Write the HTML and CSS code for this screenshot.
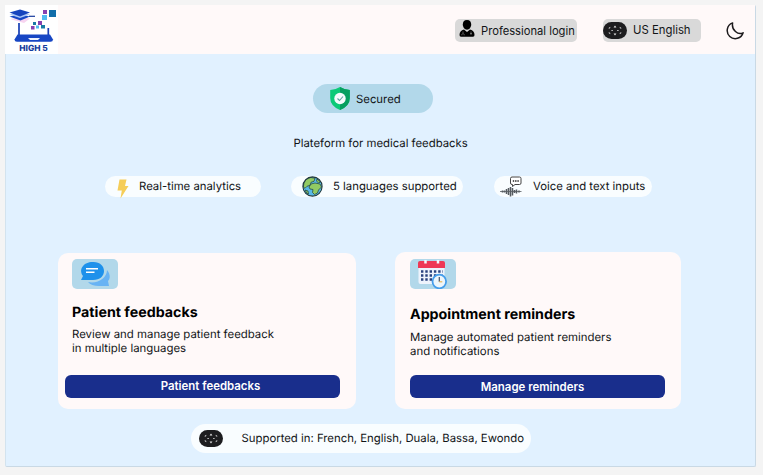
FILE: index.html
```html
<!DOCTYPE html>
<html lang="en">
<head>
<meta charset="utf-8">
<title>High 5</title>
<link rel="stylesheet" href="styles.css">
</head>
<body>
<svg class="defs" width="0" height="0" aria-hidden="true">
  <symbol id="globe" viewBox="0 0 24 17">
    <rect width="24" height="17" rx="8.500" fill="#1d1d1f"/>
    <g fill="#e8e8e8">
      <path d="M12 3.600l1.400 2h-2.800zM12 13.400l1.400-2h-2.800z"/>
      <path d="M5.200 6.200l2.200-1.400-.4 1.800zM18.800 6.200l-2.200-1.400.4 1.800zM5.200 10.800l2.200 1.400-.4-1.800zM18.800 10.800l-2.200 1.400.4-1.800z"/>
      <path d="M8.500 7.900h1.200v1.200h-1.200zM14.300 7.900h1.200v1.200h-1.200z"/>
    </g>
  </symbol>
</svg>
<div class="page">
  <header class="header">
    <div class="logo">
      <svg width="53" height="37" viewBox="0 0 53 37">
        <path d="M5 14l10-2 10 1.500-6 4.500z" fill="#f7d4f0"/>
        <path d="M4.500 11.500l10-2 10.500 2-9.500 4z" fill="#1746c4"/>
        <path d="M4.500 9.500l10-2 10.500 2-10 3.500z" fill="#a9c4f6"/>
        <path d="M4.500 7.500l10.500-3 10 3-10 4z" fill="#1743bd"/>
        <path d="M24 11.300h6" stroke="#173a9c" stroke-width="1.200"/>
        <path d="M14 18v12M43.300 23v7" stroke="#173fb5" stroke-width="1.700"/>
        <path d="M12.500 29.500h32.500l3 5q0 2.300-2.500 2.300h-33.500q-2.500 0-2.500-2.300z" fill="#1746c4"/>
        <path d="M23 33h12l-2 2h-8z" fill="#eef3ff"/>
        <path d="M44 5h7v7h-7z" fill="#126eaa"/>
        <path d="M38 5h4v4h-4zM33 16h4v4h-4zM26 21h3.500v3.500H26z" fill="#8741b0"/>
        <path d="M37 10h5v5h-5zM31 20.500h3v3h-3z" fill="#51baf0"/>
        <path d="M28 17h3v3h-3zM36 20h4v3.500h-4z" fill="#187ba5"/>
      </svg>
      <span class="logo-name">HIGH 5</span>
    </div>
    <button class="chip login">
      <svg width="16" height="18" viewBox="0 0 16 18">
        <path d="M8 0c3 0 4.200 2 4.200 4.500S10.500 9.700 8 9.700 3.800 7 3.800 4.500 5 0 8 0z"/>
        <path d="M5 9.500l3 2.500 3-2.500c3 .7 4.500 2.500 4.500 5.500q0 1.800-1.500 1.800H2Q.5 16.800.5 15C.5 12 2 10.200 5 9.500z"/>
        <path d="M4 11.500v1.700M2.800 15.300v-1q1.200-1.500 2.400 0v1M12 11.500v1.500" fill="none" stroke="#aaa" stroke-width=".5"/>
        <circle cx="12" cy="13.800" r=".7" fill="#ccc"/>
      </svg>
      <span>Professional login</span>
    </button>
    <button class="chip language">
      <svg width="24" height="17"><use href="#globe"/></svg>
      <span>US English</span>
    </button>
    <svg class="moon" width="18" height="18" viewBox="0 0 18 18">
      <path d="M6.600.9A8.100 8.100 0 1 0 17.100 10.800C12 13.500 5.300 8 6.600.9z" fill="none" stroke="#1c1a1c" stroke-width="1.500" stroke-linejoin="round"/>
    </svg>
  </header>
  <main class="main">
    <div class="secured">
      <svg width="20" height="23" viewBox="0 0 20 23">
        <path d="M10 0q5 3 9.800 3v8q0 8-9.800 12Q.2 19 .2 11V3Q5 3 10 0z" fill="#0cca78"/>
        <path d="M10 0q5 3 9.800 3v8q0 8-9.800 12z" fill="#069f60"/>
        <circle cx="10" cy="11.500" r="5.700" fill="#f4fbfc"/>
        <path d="M7.500 11.500l2 2 3.500-4" fill="none" stroke="#5f9f9e" stroke-width="1.100"/>
      </svg>
      <span>Secured</span>
    </div>
    <p class="tagline">Plateform for medical feedbacks</p>
    <div class="features">
      <div class="feature analytics">
        <svg width="12" height="20" viewBox="0 0 12 20"><path d="M2.500.5h7L8 7H11.500L3.500 19.500 4.800 11.500H.5z" fill="#f5cd58"/></svg>
        <span>Real-time analytics</span>
      </div>
      <div class="feature languages">
        <svg width="21" height="21" viewBox="0 0 21 21">
          <circle cx="10.500" cy="10.500" r="9.500" fill="#58b9e8"/>
          <path d="M2 7Q4 2 9 1.500l4 .8-1 3-3 1-1 3-3 1-2 2L1.300 11zM9 8l4-1 5 1 1.500 3-3 3-1 3-3 1.500-2-2 .5-3-3-.5-1-2zM15 3l3.500 3-2 1-2-2zM3 14l3 1 .5 3-1.500-.5z" fill="#92ca63" stroke="#294e45" stroke-width=".8"/>
          <circle cx="10.500" cy="10.500" r="9.600" fill="none" stroke="#20383d" stroke-width="1.100"/>
        </svg>
        <span>5 languages supported</span>
      </div>
      <div class="feature voice">
        <svg width="22" height="21" viewBox="0 0 22 21">
          <path d="M12 1h7.500q1.500 0 1.500 1.500v4.500q0 1.500-1.500 1.500H15L12.500 10.500V8.500H12q-1.500 0-1.500-1.500V2.500Q10.500 1 12 1z" fill="#fff" stroke="#444" stroke-width="1"/>
          <path d="M12.800 4.900h1.400M15.100 4.900h1.400M17.400 4.900h1.400" stroke="#222" stroke-width="1.500"/>
          <path d="M0 15.500h21.500" stroke="#555b60" stroke-width=".8"/>
          <path d="M2.500 14.500v2M4.500 14.500v2M6.500 13v5M8.500 12v7M10.500 11v9.500M12.500 12v7.500M14.500 14v3M16.500 13.500v4M19 14.500v2" stroke="#555b60" stroke-width="1.500"/>
        </svg>
        <span>Voice and text inputs</span>
      </div>
    </div>
    <div class="cards">
      <section class="card feedback">
        <div class="card-icon">
          <svg width="46" height="30" viewBox="0 0 46 30">
            <path d="M35 11c4 5 3 9 1 11l1 5H27c-5 0-9-1.500-11-4 10 2 19-4 19-12z" fill="#68b3f4"/>
            <path d="M20.500 3h1C28 3 32 7 32 12s-4 9-11 9H9l2-4c-5-7 1-14 9.500-14z" fill="#1e91eb"/>
            <path d="M14 9.700h12M14 13.200h8.500" stroke="#fff" stroke-width="1.400"/>
          </svg>
        </div>
        <h2>Patient feedbacks</h2>
        <p>Review and manage patient feedback<br>in multiple languages</p>
        <button class="action">Patient feedbacks</button>
      </section>
      <section class="card reminders">
        <div class="card-icon">
          <svg width="46" height="30" viewBox="0 0 46 30">
            <path d="M8.500 8h26v15q0 2-2 2h-22q-2 0-2-2z" fill="#eef3fc"/>
            <path d="M8 9V4q0-2 2-2h23q2 0 2 2v5z" fill="#ee3855"/>
            <path d="M15.500 1v3.500M28 1v3.500" stroke="#f5f8fd" stroke-width="2.500"/>
            <path d="M11 12.500h22M11 16.500h22M11 20.500h13" stroke="#28417e" stroke-width="2.400" stroke-dasharray="2.400 1.900"/>
            <circle cx="29.300" cy="22.500" r="6.800" fill="#edf5fb" stroke="#449deb" stroke-width="1.800"/>
            <path d="M29.300 18v4.800" stroke="#445268" stroke-width="1.200"/><path d="M29.300 22.800h3" stroke="#e9b657" stroke-width="1.200"/>
          </svg>
        </div>
        <h2>Appointment reminders</h2>
        <p>Manage automated patient reminders<br>and notifications</p>
        <button class="action">Manage reminders</button>
      </section>
    </div>
    <footer class="supported">
      <svg width="24" height="17"><use href="#globe"/></svg>
      <span>Supported in: French, English, Duala, Bassa, Ewondo</span>
    </footer>
  </main>
</div>
</body>
</html>
```
FILE: styles.css
```css
* { box-sizing: border-box; }
body {
  margin: 0;
  padding: 5px 7px 8px 5px;
  height: 475px;
  overflow: hidden;
  background: #f4f4f4;
  color: #111417;
  font: 11.35px/14px Inter, sans-serif;
  text-rendering: geometricPrecision;
}
h2, p { margin: 0; }
svg { display: block; flex: none; }
.defs { position: absolute; }
button { border: 0; padding: 0; font: inherit; color: inherit; }
span, p, h2 { white-space: nowrap; }
.page {
  height: 462px;
  background: #e1f1ff;
  border-right: 1px solid #c9d9e5;
  border-bottom: 1px solid #c9d9e5;
  border-left: 1px solid #d3e3ee;
  border-radius: 2px;
}
.header { display: flex; height: 49px; margin-left: -1px; background: #fff9f9; }
.logo { width: 53px; background: #fff; }
.logo-name {
  display: block;
  margin: 3px 0 0 4px;
  text-align: center;
  color: #173c9d;
  font: 800 8.4px/9px Inter, sans-serif;
}
.chip { display: flex; align-items: center; border-radius: 5px; background: #d9d9d9; }
.login { width: 122px; height: 23px; margin: 14px 0 0 397px; padding-left: 4px; gap: 6px; font-size: 11.2px; }
.login svg { margin-top: -4px; }
.login span { margin-top: 1px; }
.language { width: 98px; height: 23px; margin: 14px 0 0 26px; gap: 6px; }
.language svg, .language span { margin-top: -1px; }
.moon { margin: 17px 0 0 25px; }
.main { display: flex; flex-direction: column; }
.secured {
  display: flex;
  align-items: center;
  width: 120px;
  height: 29px;
  margin: 30px 0 0 307px;
  padding-left: 17px;
  gap: 6px;
  border-radius: 15px;
  background: #b2d8ea;
}
.secured span { margin-top: 1px; }
.tagline { margin: 23px 0 0 287.5px; }
.features { display: flex; margin: 26px 0 0 99px; }
.feature { display: flex; align-items: center; height: 21px; border-radius: 11px; background: #f9fdff; }
.feature span { margin-top: -1px; }
.analytics { width: 156px; padding-left: 12px; gap: 10px; }
.analytics svg { margin-top: 4px; }
.languages { width: 172px; margin-left: 30px; padding-left: 11px; gap: 10px; }
.voice { width: 158px; margin-left: 31px; padding-left: 6px; gap: 11px; }
.cards { display: flex; align-items: flex-end; margin: 55px 0 0 52px; }
.card { border-radius: 10px; background: #fff9f9; }
.feedback { width: 298px; height: 156px; padding: 6px 16px 0 7px; }
.reminders { width: 286px; height: 157px; margin-left: 39px; padding: 7px 16px 0 15px; }
.card-icon { width: 46px; height: 30px; border-radius: 5px; background: #b2d8ea; }
.card h2 { color: #000; font: 700 14.25px/18px Inter, sans-serif; }
.feedback .card-icon, .feedback h2, .feedback p { margin-left: 7px; }
.feedback h2 { margin-top: 15px; }
.feedback p { margin-top: 5px; }
.reminders h2 { margin-top: 17px; }
.reminders p { margin-top: 6px; }
.card p { font-size: 11.4px; }
.action {
  display: block;
  width: 100%;
  height: 23px;
  margin-top: 20px;
  border-radius: 6px;
  background: #192e8c;
  color: #fff;
  font-size: 11.45px;
  font-weight: 600;
}
.feedback .action { width: 275px; padding: 0 0 2px 16px; }
.reminders .action { padding-right: 10px; margin-top: 17px; }
.supported {
  display: flex;
  align-items: center;
  width: 340px;
  height: 29px;
  margin: 15px 0 0 185px;
  padding-left: 8px;
  gap: 18.5px;
  border-radius: 15px;
  background: #f9fdff;
}
.supported svg, .supported span { margin-top: -1px; }
```
